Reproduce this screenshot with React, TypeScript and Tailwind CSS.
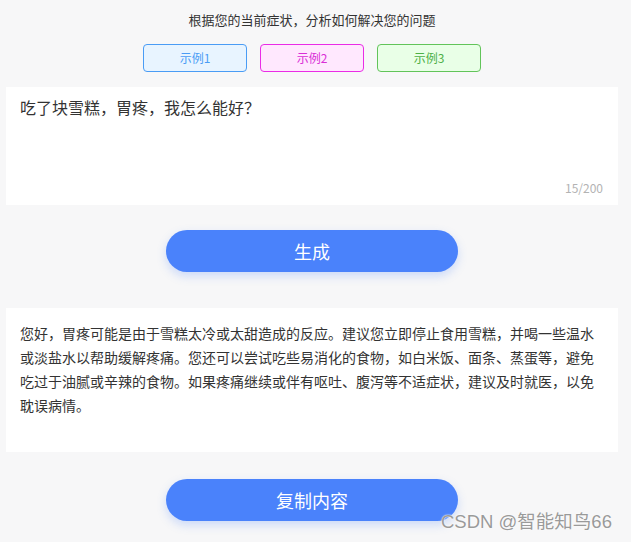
import React from "react";

const font = { fontFamily: '"Noto Sans CJK SC", "Noto Sans", sans-serif' };

export default function App() {
  return (
    <div
      className="relative w-[631px] h-[542px] bg-[#f7f7f8] overflow-hidden text-[#333]"
      style={font}
    >
      <div className="ml-[6px] w-[612px] flex flex-col items-center">
        <div className="mt-[10px] h-[20px] leading-[20px] text-[13px] text-[#333]">
          根据您的当前症状，分析如何解决您的问题
        </div>
        <div className="mt-[14px] flex gap-[13px]">
          <div className="w-[104px] h-[28px] rounded-[4px] border border-[#4a9cf5] bg-[#e8f4ff] text-[#4a9cf5] text-[12px] flex items-center justify-center">
            示例1
          </div>
          <div className="w-[104px] h-[28px] rounded-[4px] border border-[#ea2ce6] bg-[#ffe8fe] text-[#d92ed6] text-[12px] flex items-center justify-center">
            示例2
          </div>
          <div className="w-[104px] h-[28px] rounded-[4px] border border-[#62c45a] bg-[#e9ffe7] text-[#4db046] text-[12px] flex items-center justify-center">
            示例3
          </div>
        </div>
        <div className="relative mt-[15px] w-[612px] h-[118px] bg-white pt-[8px] px-[14px]">
          <div className="text-[16px] leading-[24px] text-[#333]">吃了块雪糕，胃疼，我怎么能好？</div>
          <div className="absolute right-[15px] bottom-[9px] text-[12px] leading-[16px] text-[#b3b3b3]">
            15/200
          </div>
        </div>
        <div className="mt-[25px] w-[292px] h-[42px] rounded-full bg-[#4a82fb] text-white text-[18px] flex items-center justify-center shadow-[0_4px_10px_rgba(74,130,251,0.25)]">
          生成
        </div>
        <div className="mt-[36px] w-[612px] h-[144px] bg-white pt-[13px] px-[14px]">
          <div className="text-[14px] leading-[24px] text-[#333]">
            您好，胃疼可能是由于雪糕太冷或太甜造成的反应。建议您立即停止食用雪糕，并喝一些温水或淡盐水以帮助缓解疼痛。您还可以尝试吃些易消化的食物，如白米饭、面条、蒸蛋等，避免吃过于油腻或辛辣的食物。如果疼痛继续或伴有呕吐、腹泻等不适症状，建议及时就医，以免耽误病情。
          </div>
        </div>
        <div className="mt-[27px] w-[292px] h-[42px] rounded-full bg-[#4a82fb] text-white text-[18px] flex items-center justify-center shadow-[0_4px_10px_rgba(74,130,251,0.25)]">
          复制内容
        </div>
      </div>
      <div
        className="absolute left-[441px] top-[510px] text-[18.5px] leading-[24px] text-[#9a9a9a] [text-shadow:0_0_1px_#fff,0_0_2px_#fff]"
        style={{ fontFamily: '"Liberation Sans", "Noto Sans CJK SC", sans-serif' }}
      >
        CSDN @智能知鸟66
      </div>
    </div>
  );
}
